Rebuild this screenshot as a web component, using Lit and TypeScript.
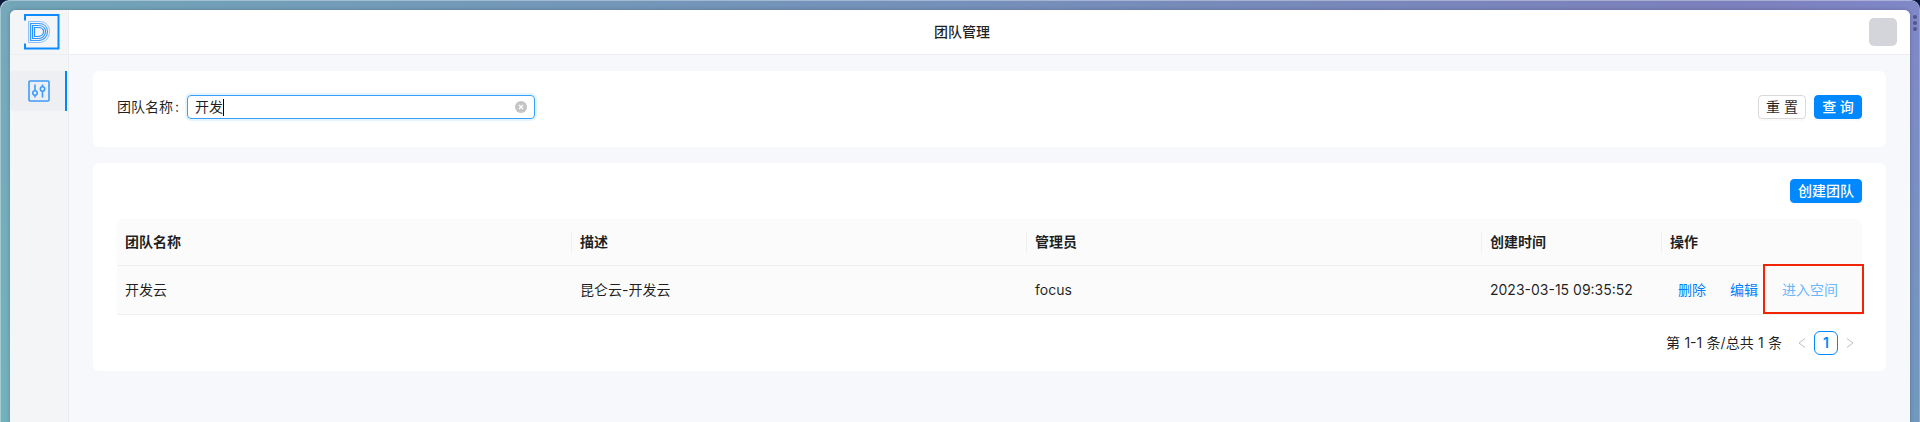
import { LitElement, html, css, svg } from "lit";
import { customElement, state } from "lit/decorators.js";

interface Team { name: string; desc: string; admin: string; created: string }

@customElement("app-root")
export class AppRoot extends LitElement {
  @state() private keyword = "开发";
  private teams: Team[] = [
    { name: "开发云", desc: "昆仑云-开发云", admin: "focus", created: "2023-03-15 09:35:52" },
  ];

  static styles = css`
    :host { display: block; height: 422px; background: #0c1a3c; overflow: hidden;
      font: 14px/22px Inter, "Noto Sans CJK SC", sans-serif; color: rgba(0, 0, 0, 0.88); }
    * { box-sizing: border-box; }
    .frame { height: 432px; padding: 10px 10px 0; border-radius: 9px 9px 0 0; position: relative;
      background: linear-gradient(to bottom, #8088c8 0, #8088c8 20px, #7299bd 422px) right / 10px 100% no-repeat,
        linear-gradient(to bottom, #76a8ba 0, #73b2bd 422px) left / 10px 100% no-repeat,
        linear-gradient(to right, #72a5b8 0, #7399b9 25%, #7590ba 50%, #7c80bc 90%, #8088c8 100%);
      box-shadow: inset 1px 1px 0 rgba(255, 255, 255, 0.35), inset -1px 0 0 rgba(255, 255, 255, 0.2); }
    .window { display: flex; height: 422px; border-radius: 6px 6px 0 0; overflow: hidden; background: #f6f8fc;
      box-shadow: 0 0 4px rgba(0, 0, 0, 0.22); }
    .dots { position: absolute; right: 3px; top: 15px; display: grid; gap: 2px; }
    .dots i { width: 4px; height: 4px; border-radius: 50%; background: #52568c; }
    .side { width: 59px; flex: none; background: #f4f5f7; border-right: 1px solid #ebedf0; }
    .logo { height: 45px; padding: 4px 0 0 14px; border-bottom: 1px solid #eceef1; }
    .logo svg, .nav svg { display: block; }
    .nav { margin: 16px 1px 0 0; height: 40px; background: #eeeff3; border-right: 2px solid #0088ff; border-radius: 4px 0 0 4px;
      display: flex; align-items: center; padding-left: 18px; }
    .main { flex: 1; min-width: 0; }
    .header { height: 45px; background: #fff; border-bottom: 1px solid #eaecf1; display: grid;
      grid-template-columns: 1fr auto 1fr; align-items: center; padding-right: 13px; }
    .title { grid-column: 2; font-weight: 500; margin-left: -42px; }
    .avatar { justify-self: end; width: 28px; height: 28px; border-radius: 5px; background: #d4d5da; }
    .content { padding: 16px 24px; display: grid; gap: 16px; }
    .card { background: #fff; border-radius: 6px; padding: 24px 24px 0; }
    .search { height: 76px; display: flex; align-items: flex-start; }
    .label { width: 70px; line-height: 24px; white-space: nowrap; }
    .colon { margin-left: 2px; }
    .input { width: 348px; height: 24px; border: 1px solid #37a0ff; border-radius: 4px; padding: 0 7px; display: flex;
      align-items: center; box-shadow: 0 0 0 2px rgba(5, 145, 255, 0.1); }
    .caret { width: 1px; height: 17px; background: #000; }
    .input svg { margin-left: auto; }
    .actions { margin-left: auto; display: flex; gap: 8px; }
    .btn { font: inherit; height: 24px; line-height: 22px; padding: 0 7px; border-radius: 4px; border: 1px solid #d9d9d9;
      background: #fff; color: inherit; box-shadow: 0 2px 0 rgba(0, 0, 0, 0.02); white-space: nowrap; text-align: center; }
    .btn.pair { width: 48px; }
    .btn.primary { background: #0088ff; border-color: #0088ff; color: #fff; font-weight: 500; }
    .list { height: 208px; padding-top: 16px; }
    .toolbar { display: flex; justify-content: flex-end; height: 40px; }
    .row { display: grid; grid-template-columns: 455px 455px 455px 180px 200px; align-items: center; background: #fbfbfb;
      border-bottom: 1px solid #f0f0f0; height: 49px; position: relative; }
    .row.head { height: 47px; border-radius: 6px 6px 0 0; font-weight: 600; }
    .cell { padding: 0 8px; }
    .head .cell { border-right: 1px solid #f0f0f0; }
    .head .cell:last-child { border-right: 0; }
    .ops { display: flex; gap: 24px; padding-left: 16px; color: #007fff; }
    .enter { color: #69b7fb; }
    .mark { position: absolute; left: 1646px; top: -2px; width: 101px; height: 50px; border: 2px solid #f12405; }
    .pager { display: flex; justify-content: flex-end; align-items: center; margin-top: 16px; height: 24px; }
    .total { margin-right: 8px; word-spacing: 0.4px; }
    .arrow { width: 24px; height: 24px; display: grid; place-items: center; }
    .page { width: 24px; height: 24px; line-height: 22px; text-align: center; border: 1px solid #0088ff; border-radius: 6px;
      color: #0088ff; font-weight: 600; }
  `;

  private logo() {
    return svg`<g fill="none" stroke="#0a8cff">
      <path d="M1 6.500V1H34.500V34.500H1V29.500" stroke-width="2"/>
      <path d="M4.500 7.500H15C22 7.500 25.500 12 25.500 17.500S22 28.500 15 28.500H4.500Z" stroke="#8fc0f8"/>
      <path d="M6.500 9.500H14.500C20.500 9.500 23.500 13 23.500 17.500S20.500 26.500 14.500 26.500H6.500Z" stroke="#3a9bfa" stroke-width="1.200"/>
      <path d="M8.500 11.500H14C19 11.500 21.500 14 21.500 17.500S19 24.500 14 24.500H8.500Z" stroke="#2b94fc" stroke-width="1.200"/>
      <path d="M10.500 13.500H14C17.500 13.500 19.500 15 19.500 17.500S17.500 22.500 14 22.500H10.500Z" stroke="#2b94fc" stroke-width="1.200"/></g>`;
  }

  render() {
    return html`<div class="frame">
      <div class="dots"><i></i><i></i><i></i></div>
      <div class="window">
        <div class="side">
          <div class="logo"><svg width="36" height="36">${this.logo()}</svg></div>
          <div class="nav"><svg width="22" height="22" fill="none" stroke="#3d9bf9" stroke-width="1.600">
            <rect x="1" y="1" width="20" height="20" rx="1"/>
            <path d="M7 4.500V10.800M7 15.200V17.500M14.500 4.500V6.800M14.500 11.200V17.500"/>
            <circle cx="7" cy="13" r="2.200"/><circle cx="14.500" cy="9" r="2.200"/></svg></div>
        </div>
        <div class="main">
          <div class="header"><div class="title">团队管理</div><div class="avatar"></div></div>
          <div class="content">
            <div class="card search">
              <div class="label">团队名称<span class="colon">:</span></div>
              <div class="input"><span>${this.keyword}</span><span class="caret"></span>
                <svg width="12" height="12"><circle cx="6" cy="6" r="6" fill="#c4c4c4"/><path d="M4 4L8 8M8 4L4 8" stroke="#fff" stroke-width="1.300"/></svg>
              </div>
              <div class="actions"><button class="btn pair">重 置</button><button class="btn pair primary">查 询</button></div>
            </div>
            <div class="card list">
              <div class="toolbar"><button class="btn primary">创建团队</button></div>
              <div class="row head">${["团队名称", "描述", "管理员", "创建时间", "操作"].map((t) => html`<div class="cell">${t}</div>`)}</div>
              ${this.teams.map((t) => html`<div class="row">
                <div class="cell">${t.name}</div><div class="cell">${t.desc}</div><div class="cell">${t.admin}</div>
                <div class="cell">${t.created}</div>
                <div class="ops"><a>删除</a><a>编辑</a><a class="enter">进入空间</a></div>
                <div class="mark"></div></div>`)}
              <div class="pager"><span class="total">第 1-1 条/总共 1 条</span>
                <span class="arrow"><svg width="8" height="10" fill="none" stroke="#bfbfbf"><path d="M7 .5L1 5L7 9.500"/></svg></span>
                <span class="page">1</span>
                <span class="arrow"><svg width="8" height="10" fill="none" stroke="#bfbfbf"><path d="M1 .5L7 5L1 9.500"/></svg></span>
              </div>
            </div>
          </div>
        </div>
      </div>
    </div>`;
  }
}
